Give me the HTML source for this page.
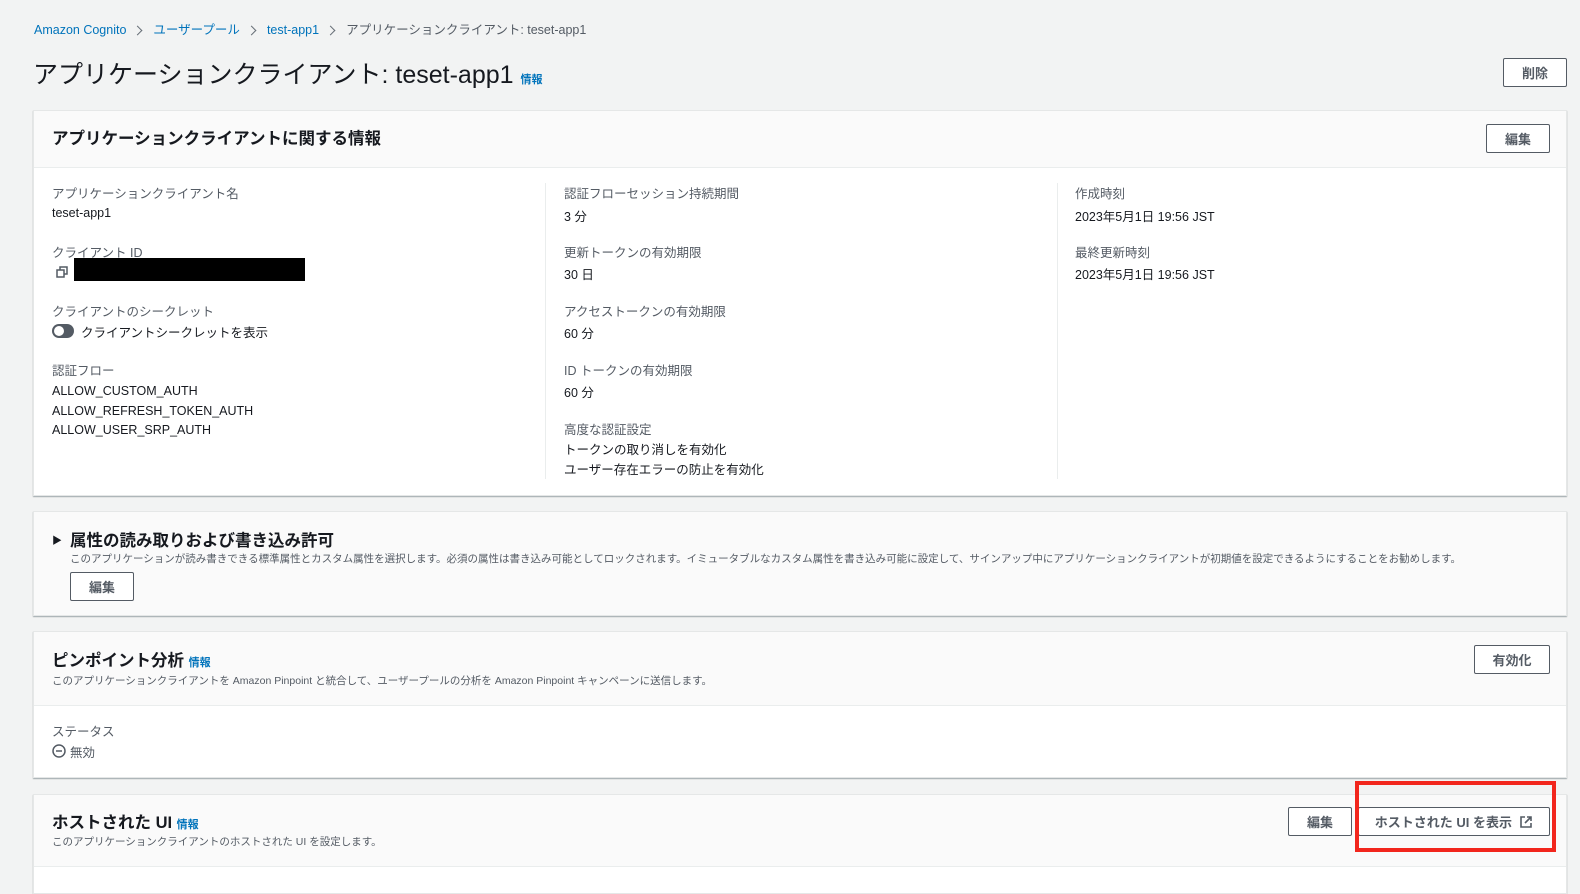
<!DOCTYPE html>
<html><head><meta charset="utf-8"><style>
*{box-sizing:border-box;margin:0;padding:0}
body{width:1580px;height:880px;overflow:hidden;background:#f2f3f3;font-family:"Liberation Sans","Noto Sans CJK JP",sans-serif;color:#16191f;position:relative}
.a{position:absolute;white-space:nowrap}
.panel{position:absolute;left:33px;width:1534px;background:#fff;border:1px solid #e5e7e7;box-shadow:0 1px 1px 0 rgba(0,28,36,.35)}
.hd{position:absolute;left:0;top:0;width:100%;background:#fafafa;border-bottom:1px solid #eaeded}
.lb{font-size:12.5px;color:#545b64}
.v{font-size:12.5px;color:#16191f}
.btn{position:absolute;border:1px solid #545b64;border-radius:2px;background:#fff;font-size:13px;font-weight:bold;color:#545b64;display:flex;align-items:center;justify-content:center}
.info{font-size:11px;font-weight:bold;color:#0073bb}
.h2{font-size:16.5px;font-weight:bold;color:#16191f}
.desc{font-size:10.5px;color:#545b64}
.vl{position:absolute;width:1px;background:#eaeded}
.chev{display:inline-block;width:7px;height:7px;border-top:1.5px solid #687078;border-right:1.5px solid #687078;transform:rotate(45deg);margin:0 12px 1px 8px;vertical-align:middle}
</style></head><body>
<div class="a" style="left:34px;top:19px;font-size:12.5px;color:#0073bb">Amazon Cognito<span class="chev"></span>ユーザープール<span class="chev"></span>test-app1<span class="chev"></span><span style="color:#545b64">アプリケーションクライアント: teset-app1</span></div>
<div class="a" style="left:33px;top:55px;font-size:25px;color:#16191f">アプリケーションクライアント: teset-app1 <span class="info">情報</span></div>
<div class="btn" style="left:1503px;top:58px;width:64px;height:29px">削除</div>

<div class="panel" style="top:110px;height:386px">
 <div class="hd" style="height:57px"></div>
 <div class="a h2" style="left:18px;top:14px">アプリケーションクライアントに関する情報</div>
 <div class="btn" style="left:1452px;top:13px;width:64px;height:29px">編集</div>
 <div class="vl" style="left:511px;top:72px;height:296px"></div>
 <div class="vl" style="left:1023px;top:72px;height:296px"></div>
 <div class="a lb" style="left:18px;top:72px">アプリケーションクライアント名</div>
 <div class="a v" style="left:18px;top:95px">teset-app1</div>
 <div class="a lb" style="left:18px;top:131px">クライアント ID</div>
 <svg class="a" style="left:22px;top:155px" width="12" height="12" viewBox="0 0 12 12"><rect x="1" y="4" width="7" height="7" fill="none" stroke="#545b64" stroke-width="1.5"/><path d="M4 4V1h7v7H8" fill="none" stroke="#545b64" stroke-width="1.5"/></svg>
 <div class="a" style="left:40px;top:147px;width:231px;height:23px;background:#000"></div>
 <div class="a lb" style="left:18px;top:190px">クライアントのシークレット</div>
 <div class="a" style="left:18px;top:213px;width:22px;height:14px;border-radius:7px;background:#545b64"><div style="position:absolute;left:2px;top:2px;width:10px;height:10px;border-radius:5px;background:#fff"></div></div>
 <div class="a v" style="left:47px;top:211px">クライアントシークレットを表示</div>
 <div class="a lb" style="left:18px;top:249px">認証フロー</div>
 <div class="a v" style="left:18px;top:271px;line-height:19.5px">ALLOW_CUSTOM_AUTH<br>ALLOW_REFRESH_TOKEN_AUTH<br>ALLOW_USER_SRP_AUTH</div>
 <div class="a lb" style="left:530px;top:72px">認証フローセッション持続期間</div>
 <div class="a v" style="left:530px;top:95px">3 分</div>
 <div class="a lb" style="left:530px;top:131px">更新トークンの有効期限</div>
 <div class="a v" style="left:530px;top:153px">30 日</div>
 <div class="a lb" style="left:530px;top:190px">アクセストークンの有効期限</div>
 <div class="a v" style="left:530px;top:212px">60 分</div>
 <div class="a lb" style="left:530px;top:249px">ID トークンの有効期限</div>
 <div class="a v" style="left:530px;top:271px">60 分</div>
 <div class="a lb" style="left:530px;top:308px">高度な認証設定</div>
 <div class="a v" style="left:530px;top:329px;line-height:20px">トークンの取り消しを有効化<br>ユーザー存在エラーの防止を有効化</div>
 <div class="a lb" style="left:1041px;top:72px">作成時刻</div>
 <div class="a v" style="left:1041px;top:95px">2023年5月1日 19:56 JST</div>
 <div class="a lb" style="left:1041px;top:131px">最終更新時刻</div>
 <div class="a v" style="left:1041px;top:153px">2023年5月1日 19:56 JST</div>
</div>

<div class="panel" style="top:511px;height:105px;background:#fafafa">
 <div class="a" style="left:18px;top:20px;font-size:10px">▶</div>
 <div class="a h2" style="left:36px;top:15px">属性の読み取りおよび書き込み許可</div>
 <div class="a desc" style="left:36px;top:39px">このアプリケーションが読み書きできる標準属性とカスタム属性を選択します。必須の属性は書き込み可能としてロックされます。イミュータブルなカスタム属性を書き込み可能に設定して、サインアップ中にアプリケーションクライアントが初期値を設定できるようにすることをお勧めします。</div>
 <div class="btn" style="left:36px;top:60px;width:64px;height:29px">編集</div>
</div>

<div class="panel" style="top:631px;height:147px">
 <div class="hd" style="height:74px"></div>
 <div class="a h2" style="left:18px;top:15px">ピンポイント分析 <span class="info">情報</span></div>
 <div class="a desc" style="left:18px;top:41px">このアプリケーションクライアントを Amazon Pinpoint と統合して、ユーザープールの分析を Amazon Pinpoint キャンペーンに送信します。</div>
 <div class="btn" style="left:1440px;top:13px;width:76px;height:29px">有効化</div>
 <div class="a lb" style="left:18px;top:89px">ステータス</div>
 <svg class="a" style="left:18px;top:112px" width="14" height="14" viewBox="0 0 14 14"><circle cx="7" cy="7" r="6" fill="none" stroke="#545b64" stroke-width="1.5"/><path d="M4 7h6" stroke="#545b64" stroke-width="1.5"/></svg>
 <div class="a lb" style="left:36px;top:110px">無効</div>
</div>

<div class="panel" style="top:794px;height:100px">
 <div class="hd" style="height:72px"></div>
 <div class="a h2" style="left:18px;top:14px">ホストされた UI <span class="info">情報</span></div>
 <div class="a desc" style="left:18px;top:39px">このアプリケーションクライアントのホストされた UI を設定します。</div>
 <div class="btn" style="left:1254px;top:12px;width:64px;height:29px">編集</div>
 <div class="btn" style="left:1324px;top:12px;width:192px;height:29px">ホストされた UI を表示&nbsp;&nbsp;<svg width="14" height="14" viewBox="0 0 14 14"><path d="M6 2H2v10h10V8M8 2h4v4M12 2L6 8" fill="none" stroke="#545b64" stroke-width="1.6"/></svg></div>
</div>
<div class="a" style="left:1355px;top:781px;width:201px;height:71px;border:4px solid #f2261d"></div>
</body></html>
